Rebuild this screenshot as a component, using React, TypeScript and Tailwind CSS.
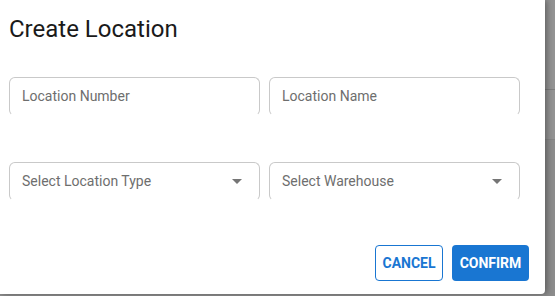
const fontStack = { fontFamily: 'Roboto, "Liberation Sans", sans-serif' };

function TextField({ placeholder }: { placeholder: string }) {
  return (
    <div className="h-[39px] rounded-[6px] border border-[#c9c9c9] border-b-transparent flex items-center px-[12px]">
      <span className="text-[14px] text-[#6e6e6e]">{placeholder}</span>
    </div>
  );
}

function SelectField({ placeholder }: { placeholder: string }) {
  return (
    <div className="h-[39px] rounded-[6px] border border-[#c9c9c9] border-b-transparent flex items-center justify-between pl-[12px] pr-[17px]">
      <span className="text-[14px] text-[#6e6e6e]">{placeholder}</span>
      {/* caret */}
      <svg width="10" height="5" viewBox="0 0 10 5" className="text-[#757575]">
        <path d="M0 0h10L5 5z" fill="currentColor" />
      </svg>
    </div>
  );
}

export default function App() {
  return (
    <div className="w-[555px] h-[296px] flex bg-[#8e8e8e] overflow-hidden" style={fontStack}>
      <div className="w-[545px] h-[294px] shrink-0 bg-white rounded-br-[4px] shadow-[2px_0_6px_rgba(0,0,0,0.35)] flex flex-col z-10">
        <h2 className="pl-[9px] pt-[15px] text-[24px] leading-[28px] text-[#1a1a1a]">Create Location</h2>

        <div className="grid grid-cols-2 gap-x-[9px] pl-[9px] pr-[25px] mt-[34px]">
          <TextField placeholder="Location Number" />
          <TextField placeholder="Location Name" />
        </div>

        <div className="grid grid-cols-2 gap-x-[9px] pl-[9px] pr-[25px] mt-[46px]">
          <SelectField placeholder="Select Location Type" />
          <SelectField placeholder="Select Warehouse" />
        </div>

        <div className="flex justify-end gap-[9px] pr-[16px] mt-[44px]">
          <button className="h-[36px] w-[68px] rounded-[4px] border border-[#1976d2] text-[#1976d2] text-[14px] font-bold">
            CANCEL
          </button>
          <button className="h-[36px] w-[77px] rounded-[4px] bg-[#1976d2] text-white text-[14px] font-bold">
            CONFIRM
          </button>
        </div>
      </div>

      {/* backdrop sliver */}
      <div className="flex-1 flex flex-col">
        <div className="h-[89px] bg-[#939393]" />
        <div className="h-px bg-[#7d7d7d]" />
        <div className="h-[49px] bg-[#939393]" />
        <div className="h-px bg-[#858585]" />
        <div className="flex-1 bg-[#8c8c8c]" />
      </div>
    </div>
  );
}
